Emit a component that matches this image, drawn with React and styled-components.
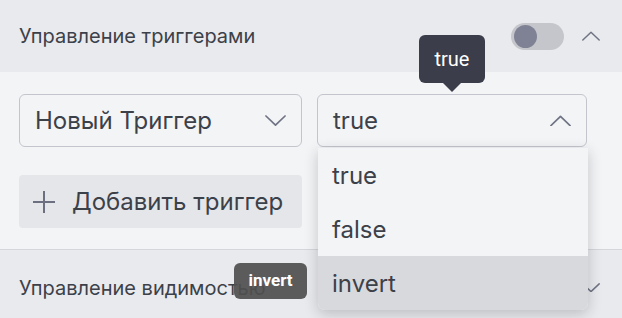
import React from "react";
import styled, { createGlobalStyle } from "styled-components";

const GlobalStyle = createGlobalStyle`
  html, body {
    margin: 0;
    padding: 0;
    background: #f3f4f6;
    font-family: Inter, Roboto, "Noto Sans", sans-serif;
    color: #3c4149;
  }
  * { box-sizing: border-box; }
`;

const Page = styled.div`
  position: relative;
  width: 622px;
  height: 318px;
  overflow: hidden;
  background: #f3f4f6;
`;

const Header = styled.div`
  display: flex;
  align-items: center;
  height: ${(p) => p.height}px;
  padding: ${(p) => (p.lower ? "3px" : "0")} 22px 0 19px;
  background: #e9eaed;
`;

const HeaderTitle = styled.div`
  flex: 1;
  font-size: 20px;
  color: #3c4149;
`;

const Toggle = styled.div`
  width: 53px;
  height: 27px;
  border-radius: 14px;
  background: #c5c6cb;
  padding: 2px 3px;
  margin-right: 18px;
`;

const Knob = styled.div`
  width: 23px;
  height: 23px;
  border-radius: 50%;
  background: #7e8294;
`;

const Body = styled.div`
  padding: 22px 19px 21px;
  border-bottom: 1px solid #d5d6da;
  display: flex;
  flex-direction: column;
  gap: 28px;
`;

const Row = styled.div`
  display: flex;
  gap: 15px;
`;

const Select = styled.div`
  width: ${(p) => p.width}px;
  height: 53px;
  border: 1px solid #c4c5cc;
  border-radius: 6px;
  display: flex;
  align-items: center;
  justify-content: space-between;
  padding: 0 15px 0 15px;
  font-size: 24px;
  background: #f3f4f6;
`;

const AddButton = styled.div`
  width: 283px;
  height: 53px;
  border-radius: 4px;
  background: #e5e6ea;
  display: flex;
  align-items: center;
  gap: 16px;
  padding-left: 13px;
  font-size: 24px;
`;

const Menu = styled.div`
  position: absolute;
  left: 318px;
  top: 148px;
  width: 270px;
  background: #f3f4f6;
  border-radius: 0 0 7px 7px;
  overflow: hidden;
  box-shadow: 0 4px 14px rgba(30, 32, 40, 0.22);
`;

const MenuItem = styled.div`
  height: 54px;
  display: flex;
  align-items: center;
  padding-left: 14px;
  font-size: 24px;
  background: ${(p) => (p.active ? "#d8d9dd" : "transparent")};
`;

const Tooltip = styled.div`
  position: absolute;
  left: ${(p) => p.x}px;
  top: ${(p) => p.y}px;
  width: ${(p) => p.w}px;
  height: ${(p) => p.h}px;
  border-radius: 6px;
  display: flex;
  align-items: center;
  justify-content: center;
  color: #fff;
  font-family: Roboto, sans-serif;
`;

const DarkTip = styled(Tooltip)`
  background: #3b3d4a;
  font-size: 20px;
  &::after {
    content: "";
    position: absolute;
    left: 50%;
    bottom: -9px;
    margin-left: -9px;
    border-left: 9px solid transparent;
    border-right: 9px solid transparent;
    border-top: 9px solid #3b3d4a;
  }
`;

const GreyTip = styled(Tooltip)`
  background: rgba(80, 80, 80, 0.93);
  font-size: 17px;
  font-weight: 700;
  padding-bottom: 3px;
`;

const Chevron = ({ up, size = 22, color = "#6f7383" }) => (
  <svg width={size} height={size * 0.55} viewBox="0 0 22 12" fill="none">
    <path
      d={up ? "M1 11 L11 1.5 L21 11" : "M1 1 L11 10.5 L21 1"}
      stroke={color}
      strokeWidth="1.8"
      strokeLinecap="round"
      strokeLinejoin="round"
    />
  </svg>
);

const Plus = () => (
  <svg width="24" height="24" viewBox="0 0 24 24" fill="none">
    <path d="M12 1 V23 M1 12 H23" stroke="#6b6f80" strokeWidth="2" />
  </svg>
);

const options = ["true", "false", "invert"];

export default function App() {
  return (
    <Page>
      <GlobalStyle />
      <Header height={72}>
        <HeaderTitle>Управление триггерами</HeaderTitle>
        <Toggle>
          <Knob />
        </Toggle>
        <Chevron up size={18} />
      </Header>
      <Body>
        <Row>
          <Select width={283}>
            <span>Новый Триггер</span>
            <Chevron size={21} />
          </Select>
          <Select width={270}>
            <span>true</span>
            <Chevron up size={21} />
          </Select>
        </Row>
        <AddButton>
          <Plus />
          <span>Добавить триггер</span>
        </AddButton>
      </Body>
      <Header height={72} lower>
        <HeaderTitle>Управление видимостью</HeaderTitle>
        <Chevron size={18} />
      </Header>
      <Menu>
        {options.map((o) => (
          <MenuItem key={o} active={o === "invert"}>
            {o}
          </MenuItem>
        ))}
      </Menu>
      <DarkTip x={419} y={35} w={66} h={48}>
        true
      </DarkTip>
      <GreyTip x={234} y={263} w={73} h={36}>
        invert
      </GreyTip>
    </Page>
  );
}
